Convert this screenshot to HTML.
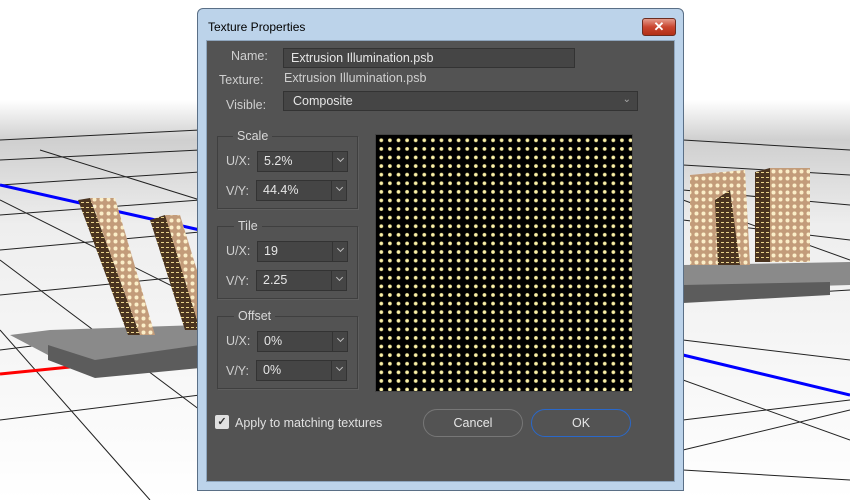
<!DOCTYPE html>
<html><head><meta charset="utf-8"><style>
*{box-sizing:border-box;margin:0;padding:0}
body{width:850px;height:500px;overflow:hidden;background:#fff;font-family:"Liberation Sans",Tahoma,sans-serif;position:relative}
.abs{position:absolute}
.dlg{left:197px;top:8px;width:487px;height:483px;background:#bcd3ea;border:1px solid #5a6f86;border-radius:6px 6px 0 0}
.title{left:10px;top:11px;font-size:12px;color:#000}
.close{left:444px;top:9px;width:34px;height:18px;background:linear-gradient(#e49b8c,#c9452f 50%,#b23016);border:1px solid #6b2c20;border-radius:3px;color:#fff;font-size:13px;font-weight:bold;text-align:center;line-height:16px}
.inner{left:8px;top:31px;width:469px;height:442px;background:#535353;border:1px solid #8fa6be}
.lbl{color:#cfcfcf;font-size:12.5px}
.inp{background:#454545;border:1px solid #333;color:#e6e6e6;font-size:12.5px;padding-left:7px;line-height:18px}
.grp{border:1px solid #3f3f3f;box-shadow:1px 1px 0 #5e5e5e}
.glbl{background:#535353;color:#d8d8d8;font-size:12.5px;padding:0 4px}
.sel{width:91px;height:21px;background:#454545;border:1px solid #333;color:#e6e6e6;font-size:12.5px;padding-left:6px;line-height:19px}
.sel:after{content:"";position:absolute;left:74px;top:0;width:1px;height:19px;background:#333}
.sel i{position:absolute;left:80px;top:4px;width:5px;height:5px;border-right:1px solid #bbb;border-bottom:1px solid #bbb;transform:rotate(45deg)}
.btn{height:28px;width:100px;border-radius:14px;border:1px solid #777;color:#e6e6e6;font-size:12.5px;text-align:center;line-height:26px;background:#535353}
</style></head><body>
<svg class="abs" style="left:0;top:0" width="850" height="500">
<defs><linearGradient id="sky" x1="0" y1="0" x2="0" y2="1"><stop offset="0" stop-color="#fff"/><stop offset="0.2" stop-color="#fff"/><stop offset="0.28" stop-color="#cfcfcf"/><stop offset="0.45" stop-color="#eee"/><stop offset="1" stop-color="#fff"/></linearGradient>
<pattern id="dots" width="7" height="7" patternUnits="userSpaceOnUse"><rect width="7" height="7" fill="#c39c7a"/><circle cx="3.5" cy="3.5" r="2" fill="#fbeec8"/></pattern>
<pattern id="dk" width="5" height="5" patternUnits="userSpaceOnUse"><rect width="5" height="5" fill="#4a3420"/><rect x="1" y="2" width="3" height="1" fill="#e8d18a"/></pattern></defs>
<rect width="850" height="500" fill="url(#sky)"/>
<g stroke="#222" stroke-width="1" fill="none">
<path d="M0 140 L200 130 M0 160 L200 150 M0 185 L200 172 M0 215 L200 200 M0 250 L200 232 M0 295 L200 275 M0 350 L200 325 M0 420 L200 395"/>
<path d="M0 200 L200 300 M0 260 L200 410 M40 150 L200 200 M0 330 L150 500"/>
<path d="M683 140 L850 150 M683 165 L850 175 M683 190 L850 205 M683 220 L850 240 M683 300 L850 290 M683 340 L850 360 M683 420 L850 400"/>
<path d="M683 200 L850 260 M683 380 L850 440 M683 470 L850 480 M683 450 L850 410"/>
</g>
<path d="M0 185 L200 230" stroke="#00f" stroke-width="3"/>
<path d="M683 355 L850 395" stroke="#00f" stroke-width="3"/>
<path d="M0 374 L80 366" stroke="#f00" stroke-width="3"/>
<polygon points="10,335 50,330 200,325 200,355 95,372 48,355" fill="#8a8a8a"/>
<polygon points="48,345 95,360 200,345 200,368 95,378 48,360" fill="#5c5c5c"/>
<polygon points="78,200 90,198 140,335 128,335" fill="url(#dk)"/>
<polygon points="90,198 115,198 155,335 140,335" fill="url(#dots)"/>
<polygon points="150,220 165,215 200,300 200,330 185,330" fill="url(#dk)"/>
<polygon points="165,215 180,215 200,280 200,330" fill="url(#dots)"/>
<polygon points="683,265 850,262 850,285 683,290" fill="#8a8a8a"/>
<polygon points="683,285 830,282 830,295 683,303" fill="#5c5c5c"/>
<polygon points="690,175 745,170 750,265 690,265" fill="url(#dots)"/>
<polygon points="715,200 730,190 740,265 718,265" fill="url(#dk)"/>
<polygon points="755,172 770,168 770,262 755,262" fill="url(#dk)"/>
<polygon points="770,168 810,168 810,262 770,262" fill="url(#dots)"/>
</svg>
<div class="abs dlg">
 <div class="abs title">Texture Properties</div>
 <div class="abs close">✕</div>
 <div class="abs inner"></div>
</div>
<div class="abs lbl" style="left:231px;top:49px">Name:</div>
<div class="abs inp" style="left:283px;top:48px;width:292px;height:20px">Extrusion Illumination.psb</div>
<div class="abs lbl" style="left:219px;top:73px">Texture:</div>
<div class="abs lbl" style="left:284px;top:71px">Extrusion Illumination.psb</div>
<div class="abs lbl" style="left:226px;top:98px">Visible:</div>
<div class="abs inp" style="left:283px;top:91px;width:355px;height:20px;padding-left:9px">Composite<span style="position:absolute;right:6px;top:-1px;color:#aaa;font-size:10px">⌄</span></div>

<div class="abs grp" style="left:217px;top:136px;width:141px;height:73px"></div>
<div class="abs glbl" style="left:233px;top:129px">Scale</div>
<div class="abs lbl" style="left:226px;top:154px">U/X:</div>
<div class="abs sel" style="left:257px;top:151px">5.2%<i></i></div>
<div class="abs lbl" style="left:226px;top:184px">V/Y:</div>
<div class="abs sel" style="left:256px;top:180px">44.4%<i></i></div>

<div class="abs grp" style="left:217px;top:226px;width:141px;height:73px"></div>
<div class="abs glbl" style="left:234px;top:219px">Tile</div>
<div class="abs lbl" style="left:226px;top:244px">U/X:</div>
<div class="abs sel" style="left:257px;top:241px">19<i></i></div>
<div class="abs lbl" style="left:226px;top:274px">V/Y:</div>
<div class="abs sel" style="left:256px;top:270px">2.25<i></i></div>

<div class="abs grp" style="left:217px;top:316px;width:141px;height:73px"></div>
<div class="abs glbl" style="left:234px;top:309px">Offset</div>
<div class="abs lbl" style="left:226px;top:334px">U/X:</div>
<div class="abs sel" style="left:257px;top:331px">0%<i></i></div>
<div class="abs lbl" style="left:226px;top:364px">V/Y:</div>
<div class="abs sel" style="left:256px;top:360px">0%<i></i></div>

<div class="abs" style="left:375px;top:134px;width:258px;height:258px;background-color:#000;background-image:radial-gradient(circle,#fff7b8 0,#f2e79a 1.6px,transparent 2.2px);background-size:8.6px 8.6px;background-position:1px 1px;border:1px solid #444"></div>

<div class="abs" style="left:215px;top:415px;width:14px;height:14px;background:#e0e0e0;border-radius:2px;color:#333;font-size:11px;text-align:center;line-height:14px;font-weight:bold">✓</div>
<div class="abs lbl" style="left:235px;top:416px;color:#e0e0e0">Apply to matching textures</div>
<div class="abs btn" style="left:423px;top:409px">Cancel</div>
<div class="abs btn" style="left:531px;top:409px;border-color:#2a68c9">OK</div>
</body></html>
